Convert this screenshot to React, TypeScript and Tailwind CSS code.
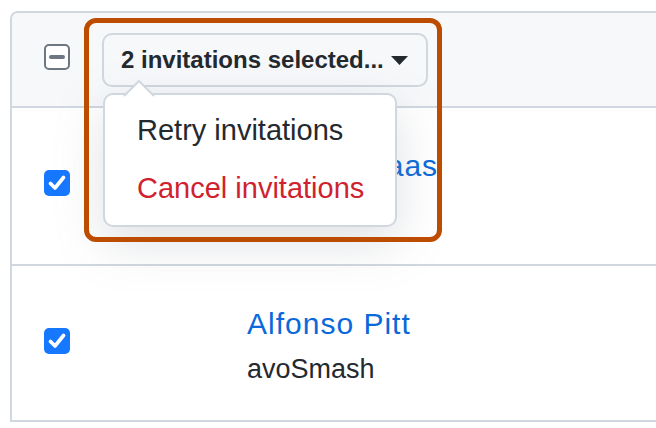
import React from 'react'

const font = { fontFamily: '"Liberation Sans", Arial, sans-serif' }

function CheckedBox() {
  return (
    <div className="w-[26px] h-[26px] rounded-[5px] bg-[#1677ff] flex items-center justify-center shrink-0">
      <svg width="18" height="16" viewBox="0 0 18 16">
        <path d="M2.5 8.5 L7 13 L15.5 2.5" fill="none" stroke="white" strokeWidth="3.6" strokeLinecap="round" strokeLinejoin="round" />
      </svg>
    </div>
  )
}

function Row({ name, login, last }: { name: string; login: string; last?: boolean }) {
  return (
    <div className={`${last ? 'h-[156px]' : 'h-[158px]'} border-b-2 border-[#d0d7de] flex items-start`}>
      <div className="ml-[32px] mt-[62px]">
        <CheckedBox />
      </div>
      <div className="ml-[177px] mt-[40px] flex flex-col">
        <a className="text-[30px] leading-[36px] tracking-[1px] text-[#0969da] whitespace-nowrap">{name}</a>
        <span className="text-[27px] leading-[36px] mt-[9px] text-[#24292f] whitespace-nowrap">{login}</span>
      </div>
    </div>
  )
}

export default function App() {
  return (
    <div className="w-[656px] h-[428px] overflow-hidden bg-white pt-[11px] pl-[10px]" style={font}>
      <div className="w-[720px] border-l-2 border-t-2 border-[#d0d7de] rounded-tl-[8px]">
        {/* Header */}
        <div className="h-[95px] bg-[#f6f8fa] border-b-2 border-[#d0d7de] rounded-tl-[6px] flex items-start relative z-10">
          <div className="ml-[32px] mt-[31px] w-[26px] h-[26px] rounded-[5px] border-2 border-[#6e7781] bg-white flex items-center justify-center">
            <div className="w-[16px] h-[4px] rounded-full bg-[#6e7781]" />
          </div>

          <div className="ml-[32px] mt-[20px] relative">
            <button className="w-[326px] h-[54px] rounded-[10px] border-2 border-[#d0d7de] bg-[#f6f8fa] flex items-center pl-[17px] text-[24px] font-semibold text-[#24292f]">
              <span>2 invitations selected...</span>
              <svg className="ml-[7px]" width="17" height="9" viewBox="0 0 17 9">
                <path d="M0 0 H17 L8.5 9 Z" fill="#24292f" />
              </svg>
            </button>

            {/* Menu */}
            <div className="absolute left-[1px] top-[60px] w-[294px] h-[134px] bg-white border-2 border-[#d0d7de] rounded-[10px] shadow-[0_16px_48px_rgba(140,149,159,0.28)] pt-[6px] pl-[32px]">
              <svg className="absolute left-[18px] top-[-15px]" width="32" height="17" viewBox="0 0 32 17">
                <path d="M0 17 L16 1 L32 17 Z" fill="white" />
                <path d="M1 16 L16 1 L31 16" fill="none" stroke="#d0d7de" strokeWidth="2" />
              </svg>
              <div className="text-[29px] leading-[58px] text-[#24292f] whitespace-nowrap">Retry invitations</div>
              <div className="text-[29px] leading-[58px] text-[#cf222e] whitespace-nowrap">Cancel invitations</div>
            </div>

            {/* Highlight */}
            <div className="absolute left-[-18px] top-[-15px] w-[358px] h-[224px] border-[5px] border-[#bc4c00] rounded-[12px] pointer-events-none" />
          </div>
        </div>

        <Row name="Hana Schaas" login="hschaas" />
        <Row name="Alfonso Pitt" login="avoSmash" last />
      </div>
    </div>
  )
}
